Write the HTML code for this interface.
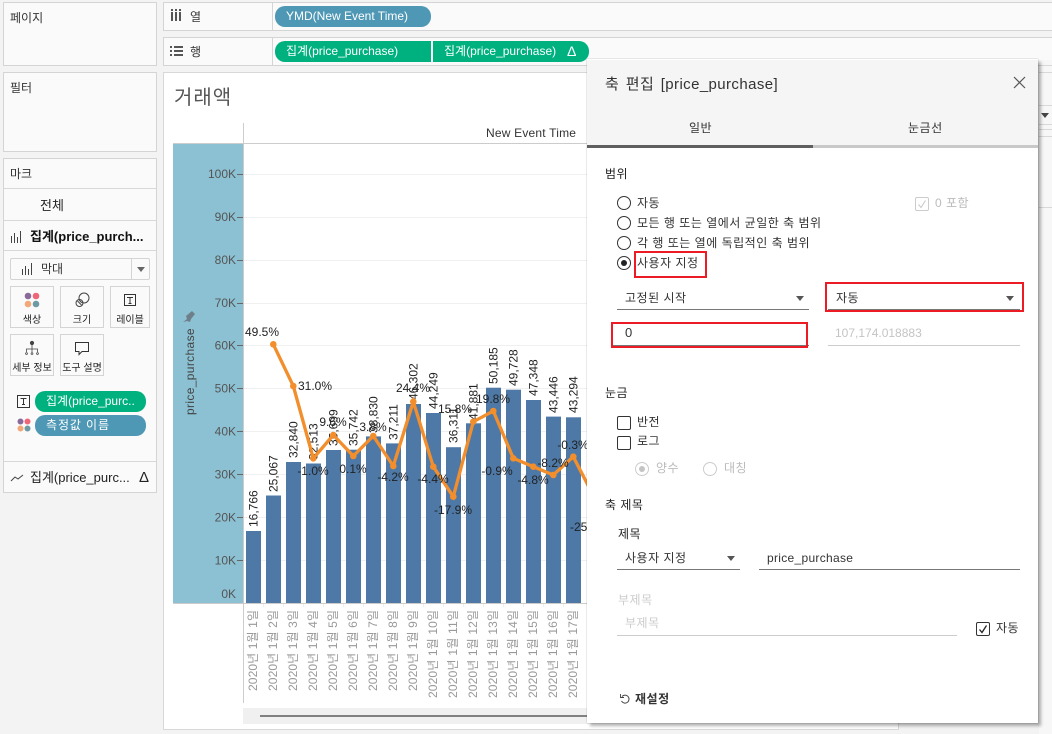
<!DOCTYPE html>
<html lang="ko"><head><meta charset="utf-8"><title>축 편집</title>
<style>
html,body{margin:0;padding:0}
body{width:1052px;height:734px;position:relative;overflow:hidden;background:#f3f3f3;font-family:"Liberation Sans","Noto Sans CJK KR",sans-serif;font-size:12px;color:#333}
.a{position:absolute;box-sizing:border-box}
.t{position:absolute;line-height:16px;white-space:nowrap}
.k{letter-spacing:.5px}
.p{position:absolute;box-sizing:border-box;background:#fafafa;border:1px solid #d4d4d4}
.l{position:absolute;height:1px;background:#d8d8d8}
.b{position:absolute;box-sizing:border-box;background:#fafafa;border:1px solid #d4d4d4}
.b span{position:absolute;left:-4px;right:-4px;bottom:0;text-align:center;font-size:10px;line-height:13px;color:#222;white-space:nowrap}
.b svg{position:absolute;left:50%;top:5px;margin-left:-8px}
.pill{position:absolute;color:#fff;line-height:20px;white-space:nowrap;height:21px;box-sizing:border-box}
.g{background:#00b180}.bl{background:#4e98b5}
.r{position:absolute;box-sizing:border-box;border:2px solid #ed1c24}
.u{position:absolute;height:1px;background:#777}
.cb{position:absolute;box-sizing:border-box;width:14px;height:14px;border:1px solid #333;border-radius:2px;background:#fff}
.c{position:absolute;width:0;height:0;border-left:4px solid transparent;border-right:4px solid transparent;border-top:5px solid #555}
.rd{position:absolute;box-sizing:border-box;width:14px;height:14px;border:1px solid #333;border-radius:50%;background:#fff}
</style></head><body>

<div class="p" style="left:3px;top:2px;width:154px;height:64px"></div>
<div class="t" style="left:10px;top:10px">페이지</div>
<div class="p" style="left:3px;top:72px;width:154px;height:80px"></div>
<div class="t" style="left:10px;top:80px">필터</div>

<div class="p" style="left:3px;top:158px;width:154px;height:335px"></div>
<div class="t" style="left:10px;top:166px">마크</div>
<div class="l" style="left:4px;top:188px;width:152px"></div>
<div class="t" style="left:40px;top:198px;font-size:13px;color:#222">전체</div>
<div class="l" style="left:4px;top:220px;width:152px"></div>
<svg class="a" style="left:10px;top:230px" width="14" height="14"><path d="M1.500 6v7M4.500 3v10M7.500 7v6M10.500 1v12" stroke="#444" stroke-width="1" fill="none"/></svg>
<div class="t" style="left:30px;top:229px;font-size:13px;font-weight:bold;color:#111">집계(price_purch...</div>
<div class="l" style="left:4px;top:250px;width:152px"></div>

<div class="a" style="left:10px;top:258px;width:140px;height:22px;border:1px solid #d4d4d4;background:#fafafa;border-radius:2px"></div>
<div class="a" style="left:131px;top:259px;width:1px;height:20px;background:#d4d4d4"></div>
<svg class="a" style="left:22px;top:263px" width="12" height="12"><path d="M.5 6v6M3.500 3v9M6.500 6v6M9.500 0v12" stroke="#444" fill="none"/></svg>
<div class="t" style="left:41px;top:261px;font-size:12px">막대</div>
<div class="c" style="left:137px;top:267px;border-top-color:#666"></div>

<div class="b" style="left:10px;top:286px;width:44px;height:42px"><svg width="16" height="16"><circle cx="4" cy="4" r="3.300" fill="#8a6a9a"/><circle cx="12" cy="4" r="3.300" fill="#ee6677"/><circle cx="4" cy="12" r="3.300" fill="#f2a878"/><circle cx="12" cy="12" r="3.300" fill="#6f9aa3"/></svg><span>색상</span></div>
<div class="b" style="left:60px;top:286px;width:44px;height:42px"><svg width="16" height="16" fill="none" stroke="#444"><circle cx="10" cy="6" r="5"/><circle cx="5.500" cy="11" r="3.500"/><path d="M3.500 9l4 4"/></svg><span>크기</span></div>
<div class="b" style="left:110px;top:286px;width:40px;height:42px"><svg width="16" height="16" fill="none" stroke="#333"><rect x="2.500" y="2.500" width="11" height="11"/><path d="M5 5.500h6M8 5.500v6M6.500 11.500h3"/></svg><span>레이블</span></div>
<div class="b" style="left:10px;top:334px;width:44px;height:42px"><svg width="16" height="16" fill="#444" stroke="#444" stroke-width=".8"><circle cx="8" cy="3" r="1.700"/><path d="M8 5v4M2.500 12V9h11v3M8 9v3" fill="none"/><circle cx="2.500" cy="13.500" r=".9" fill="none"/><circle cx="8" cy="13.500" r=".9" fill="none"/><circle cx="13.500" cy="13.500" r=".9" fill="none"/></svg><span>세부 정보</span></div>
<div class="b" style="left:60px;top:334px;width:44px;height:42px"><svg width="16" height="16" fill="none" stroke="#333"><path d="M1.500 2.500h13v9H8l-3 3v-3H1.500z"/></svg><span>도구 설명</span></div>

<svg class="a" style="left:17px;top:395px" width="14" height="14" fill="none" stroke="#333"><rect x=".5" y=".5" width="12" height="12"/><path d="M3.500 3.500h6M6.500 3.500v6M5 9.500h3"/></svg>
<div class="pill g" style="left:35px;top:391px;width:111px;border-radius:10px;padding-left:11px">집계(price_purc..</div>
<svg class="a" style="left:17px;top:418px" width="14" height="14"><circle cx="3.500" cy="3.500" r="3" fill="#8a6a9a"/><circle cx="10.500" cy="3.500" r="3" fill="#ee6677"/><circle cx="3.500" cy="10.500" r="3" fill="#f2a878"/><circle cx="10.500" cy="10.500" r="3" fill="#6f9aa3"/></svg>
<div class="pill bl" style="left:35px;top:415px;width:111px;border-radius:10px;padding-left:11px;letter-spacing:.9px">측정값 이름</div>
<div class="l" style="left:4px;top:461px;width:152px"></div>
<svg class="a" style="left:10px;top:472px" width="14" height="12"><path d="M1 9l4-4 3 2 5-4" stroke="#444" fill="none"/></svg>
<div class="t" style="left:30px;top:470px;font-size:13px;color:#222">집계(price_purc...</div>
<div class="t" style="left:139px;top:470px;font-size:15px;color:#222">Δ</div>

<div class="p" style="left:163px;top:2px;width:889px;height:29px;border-right:0"></div>
<div class="p" style="left:163px;top:37px;width:889px;height:29px;border-right:0"></div>
<div class="a" style="left:272px;top:3px;width:1px;height:27px;background:#d4d4d4"></div>
<div class="a" style="left:272px;top:38px;width:1px;height:27px;background:#d4d4d4"></div>
<svg class="a" style="left:170px;top:9px" width="12" height="13" fill="#555"><rect x="1" y="3" width="2" height="9"/><rect x="5" y="3" width="2" height="9"/><rect x="9" y="3" width="2" height="9"/><rect x="1" y="0" width="2" height="2"/><rect x="5" y="0" width="2" height="2"/><rect x="9" y="0" width="2" height="2"/></svg>
<div class="t" style="left:190px;top:9px">열</div>
<svg class="a" style="left:170px;top:45px" width="13" height="12" fill="#555"><rect y="1" width="2" height="2"/><rect x="4" y="1" width="9" height="2"/><rect y="5" width="2" height="2"/><rect x="4" y="5" width="9" height="2"/><rect y="9" width="2" height="2"/><rect x="4" y="9" width="9" height="2"/></svg>
<div class="t" style="left:190px;top:44px">행</div>
<div class="pill bl" style="left:275px;top:6px;width:156px;border-radius:10px;padding-left:11px">YMD(New Event Time)</div>
<div class="pill g" style="left:275px;top:41px;width:156px;border-radius:10px 0 0 10px;padding-left:11px">집계(price_purchase)</div>
<div class="pill g" style="left:433px;top:41px;width:156px;border-radius:0 10px 10px 0;padding-left:11px">집계(price_purchase)</div>
<div class="t" style="left:567px;top:43px;font-size:14px;color:#fff">Δ</div>

<div class="a" style="left:163px;top:72px;width:736px;height:658px;background:#fff;border:1px solid #d8d8d8"></div>
<div class="t" style="left:174px;top:85px;font-size:20px;line-height:26px;letter-spacing:1px;color:#555">거래액</div>
<div class="t" style="left:486px;top:125px;color:#333;letter-spacing:.2px">New Event Time</div>

<div class="a" style="left:173px;top:143px;width:70px;height:460px;background:#8bc1d3"></div>

<svg class="a" style="left:163px;top:110px;font-family:'Liberation Sans','Noto Sans CJK KR',sans-serif;font-size:12px" width="430" height="620" viewBox="163 110 430 620">
<g fill="#f0f0f0"><rect x="244" y="174" width="345" height="1"/><rect x="244" y="217" width="345" height="1"/><rect x="244" y="260" width="345" height="1"/><rect x="244" y="303" width="345" height="1"/><rect x="244" y="345" width="345" height="1"/><rect x="244" y="388" width="345" height="1"/><rect x="244" y="431" width="345" height="1"/><rect x="244" y="474" width="345" height="1"/><rect x="244" y="517" width="345" height="1"/><rect x="244" y="560" width="345" height="1"/></g>
<g fill="#4e79a7"><rect x="246" y="531" width="15" height="72"/><rect x="266" y="495.500" width="15" height="107.500"/><rect x="286" y="462" width="15" height="141"/><rect x="306" y="463.500" width="15" height="139.500"/><rect x="326" y="450" width="15" height="153"/><rect x="346" y="449.700" width="15" height="153.300"/><rect x="366" y="436.400" width="15" height="166.600"/><rect x="386" y="443.400" width="15" height="159.600"/><rect x="406" y="404" width="15" height="199"/><rect x="426" y="413" width="15" height="190"/><rect x="446" y="447.200" width="15" height="155.800"/><rect x="466" y="423.300" width="15" height="179.700"/><rect x="486" y="387.700" width="15" height="215.300"/><rect x="506" y="389.700" width="15" height="213.300"/><rect x="526" y="400" width="15" height="203"/><rect x="546" y="416.600" width="15" height="186.400"/><rect x="566" y="417.300" width="15" height="185.700"/></g>
<g fill="#ccc"><rect x="173" y="143" width="416" height="1"/><rect x="173" y="603" width="416" height="1"/><rect x="243" y="123" width="1" height="481"/><rect x="243" y="603" width="1" height="100"/></g>
<g fill="#eee"><rect x="263" y="604" width="1" height="3"/><rect x="283" y="604" width="1" height="3"/><rect x="303" y="604" width="1" height="3"/><rect x="323" y="604" width="1" height="3"/><rect x="343" y="604" width="1" height="3"/><rect x="363" y="604" width="1" height="3"/><rect x="383" y="604" width="1" height="3"/><rect x="403" y="604" width="1" height="3"/><rect x="423" y="604" width="1" height="3"/><rect x="443" y="604" width="1" height="3"/><rect x="463" y="604" width="1" height="3"/><rect x="483" y="604" width="1" height="3"/><rect x="503" y="604" width="1" height="3"/><rect x="523" y="604" width="1" height="3"/><rect x="543" y="604" width="1" height="3"/><rect x="563" y="604" width="1" height="3"/></g>
<g fill="#555" text-anchor="end"><text x="236" y="178">100K</text><text x="236" y="221">90K</text><text x="236" y="264">80K</text><text x="236" y="307">70K</text><text x="236" y="349.500">60K</text><text x="236" y="392.500">50K</text><text x="236" y="435.500">40K</text><text x="236" y="478.500">30K</text><text x="236" y="521.500">20K</text><text x="236" y="564.500">10K</text><text x="236" y="598">0K</text></g>
<path d="M237 174.500h6M237 217.500h6M237 260.500h6M237 303.500h6M237 345.500h6M237 388.500h6M237 431.500h6M237 474.500h6M237 517.500h6M237 560.500h6" stroke="#666"/>
<text transform="rotate(-90 194 415)" x="194" y="415" fill="#444" letter-spacing=".35">price_purchase</text>
<path d="M183 322l4-3-1-3 6-5 3 3-4 5-1 3-3-1z" fill="#6e7f8a"/>
<g fill="#222">
<text transform="rotate(-90 257.500 527)" x="257.500" y="527">16,766</text>
<text transform="rotate(-90 277.500 492)" x="277.500" y="492">25,067</text>
<text transform="rotate(-90 297.500 458)" x="297.500" y="458">32,840</text>
<text transform="rotate(-90 317.500 460)" x="317.500" y="460">32,513</text>
<text transform="rotate(-90 337.500 446)" x="337.500" y="446">35,699</text>
<text transform="rotate(-90 357.500 446)" x="357.500" y="446">35,742</text>
<text transform="rotate(-90 377.500 433)" x="377.500" y="433">38,830</text>
<text transform="rotate(-90 397.500 440)" x="397.500" y="440">37,211</text>
<text transform="rotate(-90 417.500 400)" x="417.500" y="400">46,302</text>
<text transform="rotate(-90 437.500 409)" x="437.500" y="409">44,249</text>
<text transform="rotate(-90 457.500 443)" x="457.500" y="443">36,311</text>
<text transform="rotate(-90 477.500 420)" x="477.500" y="420">41,881</text>
<text transform="rotate(-90 497.500 384)" x="497.500" y="384">50,185</text>
<text transform="rotate(-90 517.500 386)" x="517.500" y="386">49,728</text>
<text transform="rotate(-90 537.500 396)" x="537.500" y="396">47,348</text>
<text transform="rotate(-90 557.500 413)" x="557.500" y="413">43,446</text>
<text transform="rotate(-90 577.500 413)" x="577.500" y="413">43,294</text>
</g>
<polyline points="273.300,344.300 293.300,386 313.300,458.300 333.300,435 353.300,456 373.300,436 393.300,466 413.300,401.700 433.300,466.700 453.300,496.700 473.300,421.700 493.300,411 513.300,458.300 533.300,466.700 553.300,475 573.300,456.700 593,495" fill="none" stroke="#f28e2b" stroke-width="3.300"/>
<g fill="#f28e2b"><circle cx="273.300" cy="344.300" r="3.300"/><circle cx="293.300" cy="386" r="3.300"/><circle cx="313.300" cy="458.300" r="3.300"/><circle cx="333.300" cy="435" r="3.300"/><circle cx="353.300" cy="456" r="3.300"/><circle cx="373.300" cy="436" r="3.300"/><circle cx="393.300" cy="466" r="3.300"/><circle cx="413.300" cy="401.700" r="3.300"/><circle cx="433.300" cy="466.700" r="3.300"/><circle cx="453.300" cy="496.700" r="3.300"/><circle cx="473.300" cy="421.700" r="3.300"/><circle cx="493.300" cy="411" r="3.300"/><circle cx="513.300" cy="458.300" r="3.300"/><circle cx="533.300" cy="466.700" r="3.300"/><circle cx="553.300" cy="475" r="3.300"/><circle cx="573.300" cy="456.700" r="3.300"/></g>
<g fill="#222" text-anchor="middle">
<text x="262" y="336">49.5%</text><text x="315" y="390">31.0%</text><text x="313" y="475">-1.0%</text><text x="333" y="426">9.6%</text><text x="353" y="473">0.1%</text><text x="373" y="431">3.8%</text><text x="393" y="481">-4.2%</text><text x="413" y="392">24.4%</text><text x="433" y="483">-4.4%</text><text x="453" y="514">-17.9%</text><text x="455" y="413">15.8%</text><text x="493" y="403">19.8%</text><text x="497" y="475">-0.9%</text><text x="533" y="484">-4.8%</text><text x="553" y="467">-8.2%</text><text x="573" y="449">-0.3%</text><text x="589" y="531">-25.0%</text>
</g>
<g fill="#999" font-size="12">
<text transform="rotate(-90 257 691)" x="257" y="691" textLength="81">2020년 1월 1일</text>
<text transform="rotate(-90 277 691)" x="277" y="691" textLength="81">2020년 1월 2일</text>
<text transform="rotate(-90 297 691)" x="297" y="691" textLength="81">2020년 1월 3일</text>
<text transform="rotate(-90 317 691)" x="317" y="691" textLength="81">2020년 1월 4일</text>
<text transform="rotate(-90 337 691)" x="337" y="691" textLength="81">2020년 1월 5일</text>
<text transform="rotate(-90 357 691)" x="357" y="691" textLength="81">2020년 1월 6일</text>
<text transform="rotate(-90 377 691)" x="377" y="691" textLength="81">2020년 1월 7일</text>
<text transform="rotate(-90 397 691)" x="397" y="691" textLength="81">2020년 1월 8일</text>
<text transform="rotate(-90 417 691)" x="417" y="691" textLength="81">2020년 1월 9일</text>
<text transform="rotate(-90 437 698)" x="437" y="698" textLength="88">2020년 1월 10일</text>
<text transform="rotate(-90 457 698)" x="457" y="698" textLength="88">2020년 1월 11일</text>
<text transform="rotate(-90 477 698)" x="477" y="698" textLength="88">2020년 1월 12일</text>
<text transform="rotate(-90 497 698)" x="497" y="698" textLength="88">2020년 1월 13일</text>
<text transform="rotate(-90 517 698)" x="517" y="698" textLength="88">2020년 1월 14일</text>
<text transform="rotate(-90 537 698)" x="537" y="698" textLength="88">2020년 1월 15일</text>
<text transform="rotate(-90 557 698)" x="557" y="698" textLength="88">2020년 1월 16일</text>
<text transform="rotate(-90 577 698)" x="577" y="698" textLength="88">2020년 1월 17일</text>
</g>
<rect x="243" y="708" width="346" height="16" fill="#f0f0f0"/>
<rect x="260" y="715" width="329" height="2" fill="#808080"/>
</svg>

<div class="a" style="left:1039px;top:60px;width:13px;height:674px;background:#f7f7f7"></div>
<div class="a" style="left:1039px;top:65px;width:13px;height:1px;background:#d8d8d8"></div>
<div class="a" style="left:1039px;top:72px;width:13px;height:1px;background:#d8d8d8"></div>
<div class="a" style="left:1039px;top:105px;width:13px;height:1px;background:#d8d8d8"></div>
<div class="a" style="left:1039px;top:124px;width:13px;height:1px;background:#d8d8d8"></div>
<div class="a" style="left:1039px;top:129px;width:13px;height:1px;background:#d8d8d8"></div>
<div class="a" style="left:1039px;top:136px;width:13px;height:1px;background:#d8d8d8"></div>
<div class="a" style="left:1039px;top:207px;width:13px;height:1px;background:#d8d8d8"></div>
<div class="c" style="left:1041px;top:113px;border-top-color:#444"></div>

<div class="a" style="left:587px;top:59px;width:451px;height:664px;background:#fff;box-shadow:3px 3px 3px rgba(0,0,0,.3),0 0 1px rgba(0,0,0,.4)"></div>
<div class="a" style="left:587px;top:60px;width:451px;height:85px;background:#f5f5f5"></div>
<div class="a" style="left:587px;top:145px;width:226px;height:3px;background:#5f5f5f"></div>
<div class="a" style="left:813px;top:145px;width:225px;height:3px;background:#c8c8c8"></div>
<div class="t" style="left:605px;top:76px;font-size:15px;line-height:18px;letter-spacing:.4px;word-spacing:2px;color:#333">축 편집 [price_purchase]</div>
<svg class="a" style="left:1013px;top:76px" width="13" height="13"><path d="M1 1l11 11M12 1L1 12" stroke="#555" stroke-width="1.200" fill="none"/></svg>
<div class="t k" style="left:689px;top:120px">일반</div>
<div class="t k" style="left:908px;top:120px">눈금선</div>

<div class="t k" style="left:605px;top:166px;color:#222">범위</div>
<div class="rd" style="left:617px;top:196px"></div><div class="t k" style="left:637px;top:195px">자동</div>
<div class="rd" style="left:617px;top:216px"></div><div class="t k" style="left:637px;top:215px">모든 행 또는 열에서 균일한 축 범위</div>
<div class="rd" style="left:617px;top:236px"></div><div class="t k" style="left:637px;top:235px">각 행 또는 열에 독립적인 축 범위</div>
<div class="rd" style="left:617px;top:256px"></div><div class="a" style="left:621px;top:260px;width:6px;height:6px;border-radius:50%;background:#222"></div><div class="t k" style="left:637px;top:255px">사용자 지정</div>
<div class="r" style="left:634px;top:251px;width:73px;height:27px"></div>

<div class="cb" style="left:915px;top:197px;border-color:#ccc"></div>
<svg class="a" style="left:915px;top:197px" width="14" height="14"><path d="M3.500 7.500l2.500 3 4.500-7" stroke="#c8c8c8" fill="none"/></svg>
<div class="t k" style="left:935px;top:195px;color:#bbb">0 포함</div>

<div class="t k" style="left:625px;top:290px">고정된 시작</div><div class="c" style="left:796px;top:296px"></div><div class="u" style="left:617px;top:309px;width:192px"></div>
<div class="t k" style="left:836px;top:290px">자동</div><div class="c" style="left:1006px;top:296px"></div><div class="u" style="left:828px;top:309px;width:192px"></div>
<div class="r" style="left:825px;top:282px;width:199px;height:30px"></div>
<div class="t" style="left:625px;top:325px;font-size:13px">0</div><div class="u" style="left:613px;top:345px;width:196px"></div>
<div class="r" style="left:611px;top:322px;width:197px;height:26px"></div>
<div class="t" style="left:835px;top:325px;color:#c4c4c4">107,174.018883</div><div class="u" style="left:828px;top:345px;width:192px;background:#ccc"></div>

<div class="t k" style="left:605px;top:385px;color:#222">눈금</div>
<div class="cb" style="left:617px;top:416px"></div><div class="t k" style="left:637px;top:414px">반전</div>
<div class="cb" style="left:617px;top:436px"></div><div class="t k" style="left:637px;top:433px">로그</div>
<div class="rd" style="left:635px;top:462px;border-color:#ccc"></div><div class="a" style="left:639px;top:466px;width:6px;height:6px;border-radius:50%;background:#c4c4c4"></div><div class="t k" style="left:656px;top:460px;color:#bbb">양수</div>
<div class="rd" style="left:703px;top:462px;border-color:#ccc"></div><div class="t k" style="left:724px;top:460px;color:#bbb">대칭</div>

<div class="t k" style="left:605px;top:497px;color:#222">축 제목</div>
<div class="t k" style="left:618px;top:526px;color:#222">제목</div>
<div class="t k" style="left:625px;top:550px">사용자 지정</div><div class="c" style="left:727px;top:556px"></div><div class="u" style="left:617px;top:569px;width:123px"></div>
<div class="t" style="left:767px;top:550px;color:#333;letter-spacing:.3px">price_purchase</div><div class="u" style="left:759px;top:569px;width:261px"></div>
<div class="t k" style="left:618px;top:592px;color:#ccc">부제목</div>
<div class="t k" style="left:625px;top:615px;color:#ccc">부제목</div><div class="u" style="left:617px;top:635px;width:340px;background:#ccc"></div>
<div class="cb" style="left:976px;top:622px"></div>
<svg class="a" style="left:976px;top:622px" width="14" height="14"><path d="M3.500 7.500l2.500 3 4.500-7" stroke="#222" stroke-width="1.300" fill="none"/></svg>
<div class="t k" style="left:996px;top:620px">자동</div>
<svg class="a" style="left:619px;top:693px" width="12" height="12" fill="none" stroke="#444"><path d="M3 3.500a4 4 0 1 1-.5 4.500"/><path d="M1.500 1v3.500H5" stroke-width=".9"/></svg>
<div class="t k" style="left:635px;top:691px;font-weight:bold;color:#333">재설정</div>

</body></html>
